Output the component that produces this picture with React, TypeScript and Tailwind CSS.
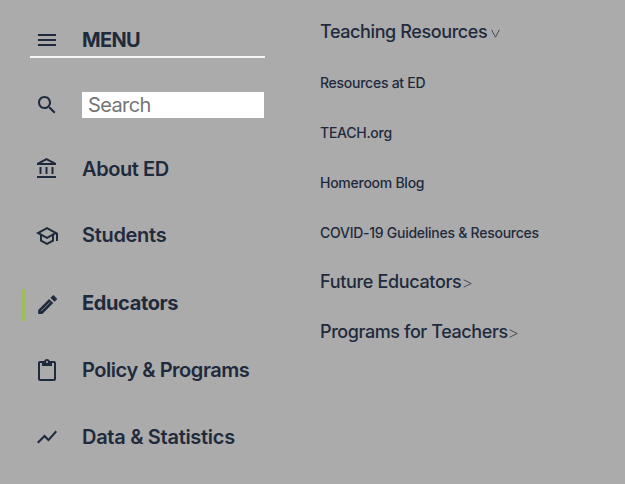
import React from "react";

function Icon({ d, className = "", slit }: { d: string; className?: string; slit?: string }) {
  return (
    <svg viewBox="0 0 24 24" className={`block size-6 shrink-0 ${className}`} fill="currentColor" aria-hidden="true">
      <path d={d} />
      {slit && <path d={slit} fill="none" stroke="#ababab" strokeWidth="0.7" />}
    </svg>
  );
}

const nav = [
  {
    label: "About ED",
    row: "h-[66px]",
    text: "font-semibold tracking-[-0.42px]",
    icon: "",
    d: "M6.5 10h-2v7h2v-7zm6 0h-2v7h2v-7zm8.5 9H2v2h19v-2zm-2.5-9h-2v7h2v-7zm-7-6.74L16.71 6H6.29l5.21-2.74m0-2.26L2 6v2h19V6l-9.5-5z",
  },
  {
    label: "Students",
    row: "h-[68px]",
    text: "font-semibold tracking-[-0.3px]",
    icon: "mt-px",
    d: "M12 3L1 9l4 2.18v6L12 21l7-3.82v-6l2-1.09V17h2V9L12 3zm6.82 6L12 12.72 5.18 9 12 5.28 18.82 9zM17 15.99l-5 2.73-5-2.73v-3.72L12 15l5-2.73v3.72z",
  },
  {
    label: "Educators",
    row: "h-[67px]",
    text: "font-bold tracking-[-0.38px]",
    icon: "mt-0.5",
    active: true,
    slit: "M6 18.2 14.9 9.3",
    d: "M3.2 16.9V21h4.1L18.2 10.1l-4.1-4.1L3.2 16.9zM21.6 6.7c.5-.45.5-1.1 0-1.55l-2.5-2.5c-.45-.45-1.1-.45-1.55 0l-2.1 2.1 4.05 4.05 2.1-2.1z",
  },
  {
    label: "Policy & Programs",
    row: "h-[67px]",
    text: "font-semibold tracking-[-0.46px]",
    icon: "mt-px",
    d: "M19 2h-4.18C14.4.84 13.3 0 12 0c-1.3 0-2.4.84-2.82 2H5c-1.1 0-2 .9-2 2v16c0 1.1.9 2 2 2h14c1.1 0 2-.9 2-2V4c0-1.1-.9-2-2-2zm-7 0c.55 0 1 .45 1 1s-.45 1-1 1-1-.45-1-1 .45-1 1-1zm7 18H5V4h2v3h10V4h2v16z",
  },
  {
    label: "Data & Statistics",
    row: "h-[50px]",
    text: "font-semibold tracking-[-0.29px]",
    icon: "",
    d: "M3.5 18.49l6-6.01 4 4L22 6.92l-1.41-1.41-7.09 7.97-4-4L2 16.99z",
  },
];

const links = ["Resources at ED", "TEACH.org", "Homeroom Blog", "COVID-19 Guidelines & Resources"];

const sections = [
  { title: "Future Educators", text: "tracking-[-0.34px]", arrow: "ml-0.5" },
  { title: "Programs for Teachers", text: "tracking-[-0.42px]", arrow: "ml-px" },
];

export default function App() {
  return (
    <div className="flex h-[484px] w-[625px] overflow-hidden bg-[#ababab] font-['Inter',sans-serif] text-[#1f2a3d]">
      <nav className="w-[265px] shrink-0">
        <div className="ml-[30px] flex h-[58px] items-start border-b-2 border-[#f4f6f5] pt-7 pl-[5px]">
          <Icon d="M3 18h18v-2H3v2zm0-5h18v-2H3v2zm0-7v2h18V6H3z" />
          <span className="ml-[23px] text-[20px] leading-6 font-bold tracking-[-0.7px]">MENU</span>
        </div>
        <div className="mt-[34px] flex h-[26px] pl-[35px]">
          <Icon
            className="mt-px"
            d="M15.5 14h-.79l-.28-.27C15.41 12.59 16 11.11 16 9.5 16 5.91 13.09 3 9.5 3S3 5.91 3 9.5 5.91 16 9.5 16c1.61 0 3.09-.59 4.23-1.57l.27.28v.79l5 4.99L20.49 19l-4.99-5zm-6 0C7.01 14 5 11.99 5 9.5S7.01 5 9.5 5 14 7.01 14 9.5 11.99 14 9.5 14z"
          />
          <input
            aria-label="Search"
            placeholder="Search"
            className="ml-[23px] h-[26px] w-[182px] bg-white px-1.5 text-[20px] tracking-[-0.6px] outline-none placeholder:text-[#757575]"
          />
        </div>
        <div className="pt-7">
          {nav.map((item) => (
            <div key={item.label} className={`flex items-start pt-[11px] ${item.row}`}>
              <span
                className={`mr-[9px] ml-[21px] h-8 w-[5px] shrink-0 rounded-[1px] ${item.active ? "-mt-0.5 bg-[#a0bd5e]" : ""}`}
              />
              <Icon d={item.d} className={item.icon} slit={item.slit} />
              <span className={`ml-[23px] text-[20px] leading-6 whitespace-nowrap ${item.text}`}>{item.label}</span>
            </div>
          ))}
        </div>
      </nav>
      <section className="ml-[55px] pt-5">
        <h2 className="flex h-[50px] text-[18px] leading-6 font-medium tracking-[-0.4px]">
          Teaching Resources
          <svg viewBox="0 0 9 9" className="mt-[9px] ml-1 size-[9px]" fill="none" stroke="#3c424c" strokeWidth="0.9">
            <path d="M.6 .8 4.5 8.2 8.4 .8" />
          </svg>
        </h2>
        {links.map((link) => (
          <div key={link} className="h-[50px] pt-px text-[14px] leading-6 font-medium tracking-[-0.26px]">
            {link}
          </div>
        ))}
        {sections.map((section) => (
          <h2 key={section.title} className={`flex h-[50px] text-[18px] leading-6 font-medium ${section.text}`}>
            {section.title}
            <svg
              viewBox="0 0 9 9"
              className={`mt-[9px] size-[9px] ${section.arrow}`}
              fill="none"
              stroke="#3c424c"
              strokeWidth="0.9"
            >
              <path d="M.7 .8 8.2 4.5 .7 8.2" />
            </svg>
          </h2>
        ))}
      </section>
    </div>
  );
}
